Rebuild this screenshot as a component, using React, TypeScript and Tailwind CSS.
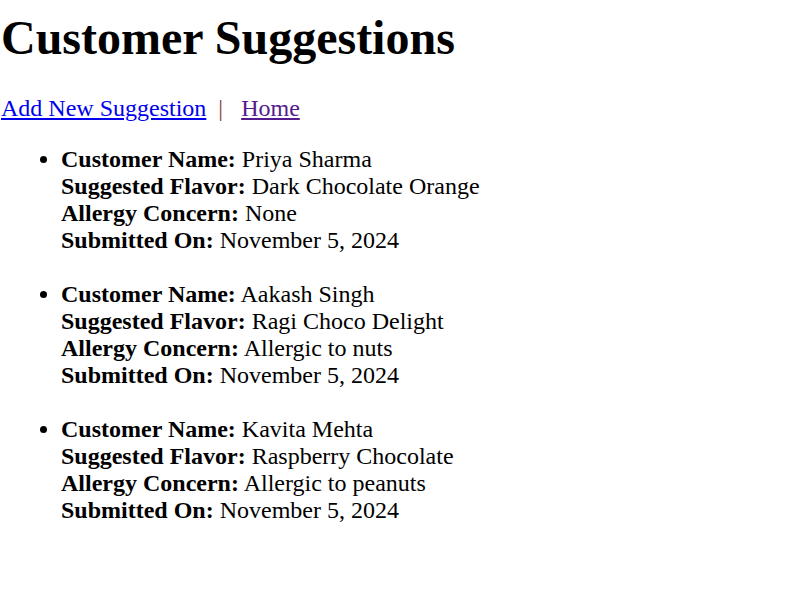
import React from "react";

const items = [
  { name: "Priya Sharma", flavor: "Dark Chocolate Orange", allergy: "None", date: "November 5, 2024" },
  { name: "Aakash Singh", flavor: "Ragi Choco Delight", allergy: "Allergic to nuts", date: "November 5, 2024" },
  { name: "Kavita Mehta", flavor: "Raspberry Chocolate", allergy: "Allergic to peanuts", date: "November 5, 2024" },
];

export default function App() {
  return (
    <div className="w-[804px] h-[600px] bg-white text-black pl-[1px] pt-[10px]" style={{ fontFamily: '"Liberation Serif", "Times New Roman", serif' }}>
      <h1 className="text-[48px] font-bold leading-[55px]">Customer Suggestions</h1>
      <p className="mt-[30px] text-[24px] leading-[27px]">
        <a href="#" className="text-[#0000ee] underline">Add New Suggestion</a>
        <span className="inline-block ml-[12px] mr-[18px] text-[#8b3a3a]">|</span>
        <a href="#" className="text-[#551a8b] underline">Home</a>
      </p>
      <ul className="mt-[24px] pl-[60px] list-disc text-[24px] leading-[27px]">
        {items.map((it, i) => (
          <li key={i} className="mb-[27px]">
            <b>Customer Name:</b> {it.name}
            <br />
            <b>Suggested Flavor:</b> {it.flavor}
            <br />
            <b>Allergy Concern:</b> {it.allergy}
            <br />
            <b>Submitted On:</b> {it.date}
          </li>
        ))}
      </ul>
    </div>
  );
}
